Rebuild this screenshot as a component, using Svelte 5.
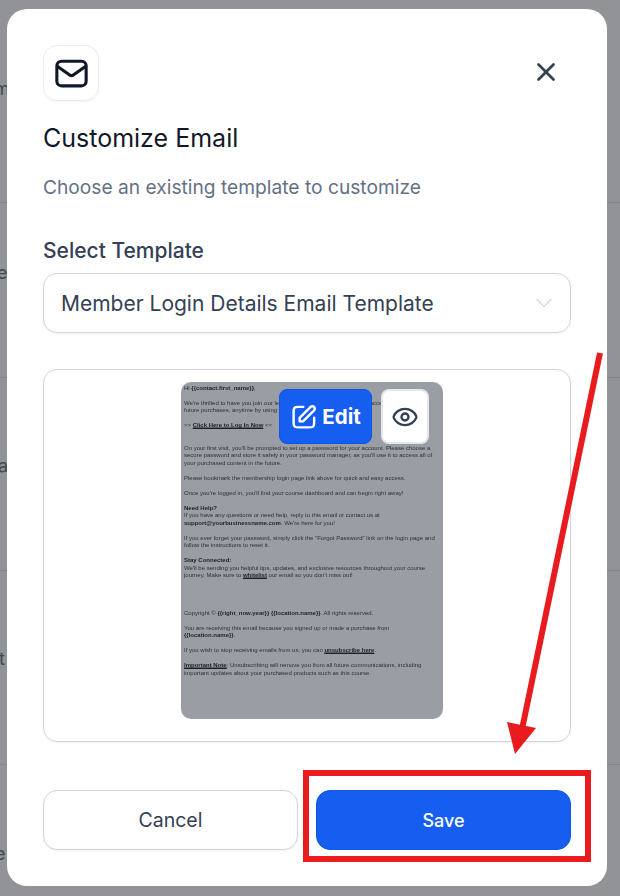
<script>
	let template = 'Member Login Details Email Template'
</script>

<div class="page">
	<div class="backdrop">
		<div class="bg-row r1"><span>m</span></div>
		<div class="bg-row r2"><span>e</span></div>
		<div class="bg-row r3"><span>ai</span></div>
		<div class="bg-row r4"><span>t</span></div>
		<div class="bg-row r5"><span>e.</span></div>
	</div>

	<div class="modal">
		<div class="head">
			<div class="icon-box">
				<svg width="37" height="37" viewBox="0 0 24 24" fill="none" stroke="#101828" stroke-width="2" stroke-linecap="round" stroke-linejoin="round">
					<path d="M3 7.5l7.35 5.14c.6.42.9.63 1.22.71.29.07.59.07.86 0 .33-.08.63-.29 1.22-.71L21 7.5" />
					<rect x="2.500" y="4" width="19" height="16" rx="3" />
				</svg>
			</div>
			<button class="close" aria-label="Close">
				<svg width="30" height="30" viewBox="0 0 24 24" fill="none" stroke="#344054" stroke-width="2.2" stroke-linecap="round">
					<path d="M18 6L6 18M6 6l12 12" />
				</svg>
			</button>
		</div>

		<h2>Customize Email</h2>
		<p class="sub">Choose an existing template to customize</p>

		<div class="label">Select Template</div>
		<div class="select">
			<span>{template}</span>
			<svg width="20" height="20" viewBox="0 0 20 20" fill="none" stroke="#d5d9e0" stroke-width="1.3" stroke-linecap="round" stroke-linejoin="round">
				<path d="M3 6.500l7 7 7-7" />
			</svg>
		</div>

		<div class="preview">
			<div class="mail-wrap">
				<div class="mail">
					<p>Hi <b>&#123;&#123;contact.first_name&#125;&#125;</b>,</p>
					<p>We're thrilled to have you join our learning community! This gives you access to this and all<br />future purchases, anytime by using your membership login.</p>
					<p>&gt;&gt; <b><u>Click Here to Log In Now</u></b> &lt;&lt;</p>
					<p class="gap">On your first visit, you'll be prompted to set up a password for your account. Please choose a secure password and store it safely in your password manager, as you'll use it to access all of your purchased content in the future.</p>
					<p>Please bookmark the membership login page link above for quick and easy access.</p>
					<p>Once you're logged in, you'll find your course dashboard and can begin right away!</p>
					<p><b>Need Help?</b><br />If you have any questions or need help, reply to this email or contact us at <br /><b>support@yourbusinessname.com</b>. We're here for you!</p>
					<p>If you ever forget your password, simply click the "Forgot Password" link on the login page and follow the instructions to reset it.</p>
					<p><b>Stay Connected:</b><br />We'll be sending you helpful tips, updates, and exclusive resources throughout your course journey. Make sure to <b><u>whitelist</u></b> our email so you don't miss out!</p>
					<p class="gap-big">Copyright © <b>&#123;&#123;right_now.year&#125;&#125; &#123;&#123;location.name&#125;&#125;</b>. All rights reserved.</p>
					<p>You are receiving this email because you signed up or made a purchase from <br /><b>&#123;&#123;location.name&#125;&#125;</b>.</p>
					<p>If you wish to stop receiving emails from us, you can <b><u>unsubscribe here</u></b>.</p>
					<p><b><u>Important Note</u></b>: Unsubscribing will remove you from all future communications, including important updates about your purchased products such as this course.</p>
				</div>
				<div class="mail-shade"></div>
				<div class="mail-actions">
					<button class="edit">
						<svg width="29" height="29" viewBox="0 0 24 24" fill="none" stroke="#fff" stroke-width="2" stroke-linecap="round" stroke-linejoin="round">
							<path d="M11 4H7.800C6.100 4 5.300 4 4.600 4.300 4 4.600 3.600 5 3.300 5.600 3 6.300 3 7.100 3 8.800V16.200C3 17.900 3 18.700 3.300 19.400 3.600 20 4 20.400 4.600 20.700 5.300 21 6.100 21 7.800 21H15.200C16.900 21 17.700 21 18.400 20.700 19 20.400 19.400 20 19.700 19.400 20 18.700 20 17.900 20 16.200V13" />
							<path d="M8 16H10.800L19.900 6.900C20.700 6.100 20.700 4.900 19.900 4.100 19.100 3.300 17.900 3.300 17.100 4.100L8 13.200V16Z" />
						</svg>
						Edit
					</button>
					<button class="eye" aria-label="Preview">
						<svg width="28" height="28" viewBox="0 0 24 24" fill="none" stroke="#344054" stroke-width="2" stroke-linecap="round" stroke-linejoin="round">
							<path d="M2.400 12.700C2.300 12.400 2.300 11.600 2.400 11.300 3.700 8 7.500 5 12 5S20.300 8 21.600 11.300C21.700 11.600 21.700 12.400 21.600 12.700 20.300 16 16.500 19 12 19S3.700 16 2.400 12.700Z" />
							<circle cx="12" cy="12" r="3" />
						</svg>
					</button>
				</div>
			</div>
		</div>

		<div class="footer">
			<button class="btn cancel">Cancel</button>
			<button class="btn save">Save</button>
		</div>
	</div>

	<!-- screenshot annotation drawn over the dialog -->
	<div class="callout"></div>
	<svg class="arrow" width="620" height="896" viewBox="0 0 620 896">
		<line x1="600" y1="353" x2="522.500" y2="727" stroke="#e81c1f" stroke-width="6" />
		<polygon points="515,754 507,722 536,728" fill="#e81c1f" />
	</svg>
</div>

<style>
	:global(body) {
		margin: 0;
		font-family: Inter, "Noto Sans", sans-serif;
	}

	* {
		box-sizing: border-box;
	}

	.page {
		position: relative;
		width: 620px;
		height: 896px;
		overflow: hidden;
		background: #929396;
		padding: 9px 13px 10px 7px;
	}

	.backdrop {
		position: absolute;
		inset: 0;
		color: #3f4a50;
		font-size: 18px;
		line-height: 20px;
	}

	.bg-row {
		border-bottom: 1px solid #85868a;
		margin-left: -3px;
	}

	.r1 { height: 203px; padding-top: 79px; margin-left: -6px; }
	.r2 { height: 175px; padding-top: 60px; margin-left: -3px; }
	.r3 { height: 193px; padding-top: 78px; margin-left: -2px; }
	.r4 { height: 194px; padding-top: 78px; margin-left: -1px; }
	.r5 { height: 131px; padding-top: 79px; margin-left: -5px; border-bottom: 0; }

	.modal {
		position: relative;
		display: flex;
		flex-direction: column;
		height: 877px;
		background: #fff;
		border-radius: 20px;
		padding: 36px;
	}

	.head {
		display: flex;
		justify-content: space-between;
		align-items: flex-start;
	}

	.icon-box {
		width: 56px;
		height: 56px;
		display: flex;
		align-items: center;
		justify-content: center;
		border: 1px solid #eaecf0;
		border-radius: 14px;
		box-shadow: 0 1px 2px rgba(16, 24, 40, 0.05);
	}

	.close {
		background: none;
		border: 0;
		padding: 0;
		margin: 12px 10px 0 0;
		height: 30px;
		width: 30px;
	}

	h2 {
		margin: 20px 0 0;
		font-size: 25px;
		line-height: 35px;
		font-weight: 400;
		color: #101828;
	}

	.sub {
		margin: 16px 0 0;
		font-size: 19.2px;
		line-height: 30px;
		color: #667085;
	}

	.label {
		margin-top: 35px;
		font-size: 21px;
		line-height: 28px;
		font-weight: 500;
		color: #344054;
	}

	.select {
		margin-top: 8px;
		height: 60px;
		display: flex;
		align-items: center;
		justify-content: space-between;
		padding: 0 16px 0 17px;
		border: 1px solid #d0d5dd;
		border-radius: 14px;
		box-shadow: 0 1px 2px rgba(16, 24, 40, 0.05);
		font-size: 21px;
		color: #344054;
	}

	.preview {
		margin-top: 36px;
		height: 373px;
		display: flex;
		justify-content: center;
		padding: 12px 0 0 10px;
		border: 1px solid #d0d5dd;
		border-radius: 14px;
		box-shadow: 0 1px 2px rgba(16, 24, 40, 0.05);
	}

	.mail-wrap {
		position: relative;
		width: 262px;
		height: 337px;
		border-radius: 10px;
		overflow: hidden;
	}

	.mail {
		height: 100%;
		padding: 2.500px 3px;
		background: #fff;
		font-family: "Liberation Sans", Arial, sans-serif;
		font-size: 6px;
		line-height: 7.500px;
		color: #222;
		filter: blur(0.25px);
	}

	.mail p {
		margin: 0 0 7.500px;
	}

	.mail b {
		color: #000;
	}

	.mail u {
		background: linear-gradient(transparent 78%, #8a8a8a 78%);
	}

	.mail .gap {
		margin-top: 15px;
	}

	.mail .gap-big {
		margin-top: 30px;
	}

	.mail-shade {
		position: absolute;
		inset: 0;
		background: rgba(56, 60, 76, 0.5);
	}

	.mail-actions {
		position: absolute;
		top: 7px;
		left: 98px;
		display: flex;
		gap: 9px;
	}

	.edit,
	.eye {
		height: 55px;
		border-radius: 8px;
		display: flex;
		align-items: center;
		justify-content: center;
		padding: 0;
		font-family: inherit;
	}

	.edit {
		width: 93px;
		gap: 3px;
		background: #155eef;
		border: 1px solid #0f56e0;
		color: #fff;
		font-size: 20.500px;
		font-weight: 700;
	}

	.eye {
		width: 48px;
		background: #fff;
		border: 2px solid #e4e7ec;
	}

	.footer {
		margin-top: auto;
		display: flex;
		gap: 18px;
	}

	.btn {
		flex: 1;
		height: 60px;
		border-radius: 14px;
		font-family: inherit;
		font-size: 19.500px;
	}

	.cancel {
		background: #fff;
		border: 1px solid #d0d5dd;
		color: #344054;
		box-shadow: 0 1px 2px rgba(16, 24, 40, 0.05);
	}

	.save {
		background: #155eef;
		border: 1px solid #0f56e0;
		color: #fff;
		font-size: 18px;
		font-weight: 500;
	}

	.callout {
		position: absolute;
		left: 303px;
		top: 770px;
		width: 288px;
		height: 92px;
		border: 6px solid #e81c1f;
	}

	.arrow {
		position: absolute;
		left: 0;
		top: 0;
		pointer-events: none;
	}
</style>
